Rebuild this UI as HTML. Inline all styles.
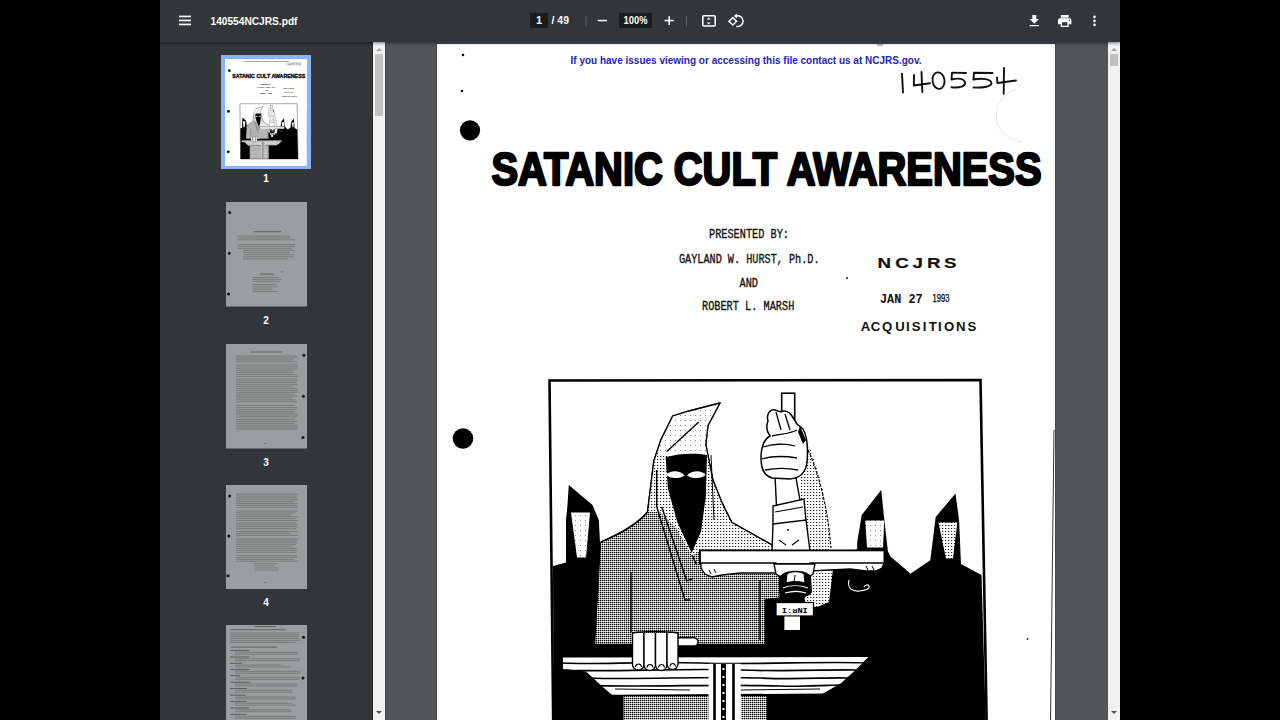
<!DOCTYPE html>
<html><head><meta charset="utf-8">
<style>
*{margin:0;padding:0;box-sizing:border-box}
html,body{width:1280px;height:720px;overflow:hidden;background:#000;font-family:"Liberation Sans",sans-serif}
.abs{position:absolute}
#tb{left:160px;top:0;width:960px;height:42px;background:#323639;box-shadow:0 1px 3px rgba(0,0,0,.5);z-index:5}
#side{left:160px;top:42px;width:213px;height:678px;background:#323639}
#main{left:385px;top:42px;width:723px;height:678px;background:#525659}
#sbl{left:373px;top:42px;width:12px;height:678px;background:#f1f1f1}
#sbr{left:1108px;top:42px;width:12px;height:678px;background:#f1f1f1}
.lbl{color:#fff;font-size:11px;width:40px;text-align:center;left:246px}
.page{left:437px;top:44px}
.tp{left:226px;width:80px;background:#9b9c9d;overflow:hidden}
</style></head><body>
<div id="tb" class="abs">
  <svg class="abs" style="left:0;top:0" width="960" height="42" font-family="Liberation Sans">
    <g fill="#fff">
      <rect x="19" y="15.6" width="12" height="1.7"/>
      <rect x="19" y="19.6" width="12" height="1.7"/>
      <rect x="19" y="23.6" width="12" height="1.7"/>
    </g>
    <text x="50.5" y="24.5" fill="#fff" font-weight="bold" font-size="11" textLength="87" lengthAdjust="spacingAndGlyphs">140554NCJRS.pdf</text>
    <rect x="370" y="13" width="18" height="15" fill="#191b1c"/>
    <text x="379" y="24.3" fill="#fff" font-size="11" font-weight="bold" text-anchor="middle">1</text>
    <text x="391.5" y="24.3" fill="#fff" font-size="11" font-weight="bold" lengthAdjust="spacingAndGlyphs" textLength="17.5">/ 49</text>
    <rect x="425.5" y="16" width="1" height="10.5" fill="#5f6368"/>
    <rect x="437.8" y="19.8" width="9.2" height="1.5" fill="#fff"/>
    <rect x="459" y="13" width="33" height="15" fill="#191b1c"/>
    <text x="463.5" y="24.3" fill="#fff" font-size="11" font-weight="bold" lengthAdjust="spacingAndGlyphs" textLength="24">100%</text>
    <rect x="504.5" y="19.8" width="9.3" height="1.5" fill="#fff"/>
    <rect x="508.4" y="16.2" width="1.5" height="8.8" fill="#fff"/>
    <rect x="526" y="16" width="1" height="10.5" fill="#5f6368"/>
    <rect x="542.8" y="15.8" width="12.4" height="10.2" rx="1" fill="none" stroke="#fff" stroke-width="1.6"/>
    <path d="M546.7 19.6 L548.7 17.6 L550.7 19.6 Z M546.7 22.4 L548.7 24.4 L550.7 22.4 Z" fill="#fff"/>
    <path d="M572.8 17.6 L576.6 21.3 L572.8 25 L569 21.3 Z" fill="none" stroke="#fff" stroke-width="1.5"/>
    <path d="M576.4 15.9 A5.4 5.4 0 1 1 576.4 26.4" fill="none" stroke="#fff" stroke-width="1.5"/>
    <path d="M573.8 15.9 L577 13.6 L577 18.2 Z" fill="#fff"/>
    <g transform="translate(866.3 13) scale(0.6667)" fill="#fff">
      <path d="M19 9h-4V3H9v6H5l7 7 7-7zM5 18v2h14v-2H5z"/>
    </g>
    <g transform="translate(896.7 13) scale(0.6667)" fill="#fff">
      <path d="M19 8H5c-1.66 0-3 1.34-3 3v6h4v4h12v-4h4v-6c0-1.66-1.34-3-3-3zm-3 11H8v-5h8v5zm3-7c-.55 0-1-.45-1-1s.45-1 1-1 1 .45 1 1-.45 1-1 1zm-1-9H6v4h12V3z"/>
    </g>
    <g transform="translate(926.5 12.8) scale(0.6667)" fill="#fff">
      <path d="M12 8c1.1 0 2-.9 2-2s-.9-2-2-2-2 .9-2 2 .9 2 2 2zm0 2c-1.1 0-2 .9-2 2s.9 2 2 2 2-.9 2-2-.9-2-2-2zm0 6c-1.1 0-2 .9-2 2s.9 2 2 2 2-.9 2-2-.9-2-2-2z"/>
    </g>
  </svg>
</div>
<div id="side" class="abs"></div>
<div id="sbl" class="abs"></div>
<div id="main" class="abs"></div>
<div class="abs" style="left:372px;top:42px;width:1px;height:678px;background:#26292b"></div>
<div class="abs" style="left:385px;top:42px;width:1px;height:678px;background:#45484b"></div>
<div id="sbr" class="abs"></div>

<!-- page content symbol -->
<svg width="0" height="0" style="position:absolute">
  <defs>
    <pattern id="st" width="2" height="2" patternUnits="userSpaceOnUse">
      <rect width="2" height="2" fill="#fff"/>
      <rect width="1" height="1" fill="#000"/>
      <rect x="1" width="1" height="1" fill="#9a9a9a"/>
      <rect y="1" width="1" height="1" fill="#b0b0b0"/>
    </pattern>
    <pattern id="st2" width="3" height="3" patternUnits="userSpaceOnUse">
      <rect width="3" height="3" fill="#fff"/>
      <rect width="1" height="1" fill="#222"/>
      <rect x="1" width="1" height="1" fill="#ccc"/>
    </pattern>
    <pattern id="st3" width="5" height="5" patternUnits="userSpaceOnUse">
      <rect width="5" height="5" fill="#fff"/>
      <rect width="1" height="1" fill="#888"/>
    </pattern>
  </defs>
  <symbol id="pg" viewBox="437 44 618 805">
    <rect x="437" y="44" width="618" height="805" fill="#fff"/>
    <text x="570.5" y="63.6" fill="#2424b4" font-family="Liberation Sans" font-weight="bold" font-size="10" textLength="351" lengthAdjust="spacingAndGlyphs">If you have issues viewing or accessing this file contact us at NCJRS.gov.</text>
    <!-- dots -->
    <circle cx="463" cy="55" r="1.3" fill="#000"/>
    <circle cx="462" cy="91" r="1.2" fill="#000"/>
    <circle cx="470" cy="130.3" r="10.1" fill="#000"/>
    <circle cx="463" cy="438.5" r="10.3" fill="#000"/>
    <circle cx="462" cy="743" r="10.3" fill="#000"/>
    <!-- handwriting -->
    <g fill="none" stroke="#111" stroke-width="1.9" stroke-linecap="round" stroke-linejoin="round">
      <path d="M902 73.8 L903 92.5"/>
      <path d="M914 75 L913.8 85.5 L930 83.2 M921.5 72 L922.3 92"/>
      <ellipse cx="938.5" cy="80.6" rx="6" ry="8.3" transform="rotate(-8 938.5 80.6)"/>
      <path d="M966 73 L952 72.6 L951.5 79.5 C958 78 964 78.5 965 82.5 C965.5 86.5 960 88 951.5 87.3"/>
      <path d="M992.5 73 L974 72.8 L973.5 79.5 C982 78 991 79 991.5 83 C991.5 86.5 984 88 973.5 87.5"/>
      <path d="M997 77.5 L997.3 83 L1016 80.5 M1004 68 L1003.7 93.8"/>
    </g>
    <path d="M1016 89 C1000 95 994 110 997 122 C1000 133 1010 140 1022 142" fill="none" stroke="#e2e2e2" stroke-width="0.9"/>
    <!-- title -->
    <text x="491.5" y="184.5" fill="#000" stroke="#000" stroke-width="2.4" stroke-linejoin="round" font-family="Liberation Sans" font-weight="bold" font-size="45.5" textLength="550" lengthAdjust="spacingAndGlyphs">SATANIC CULT AWARENESS</text>
    <!-- typewriter -->
    <g fill="#111" stroke="#111" stroke-width="0.35" font-family="Liberation Mono" font-size="13">
      <text x="709" y="238" lengthAdjust="spacingAndGlyphs" textLength="80">PRESENTED BY:</text>
      <text x="679" y="262.5" lengthAdjust="spacingAndGlyphs" textLength="140.5">GAYLAND W. HURST, Ph.D.</text>
      <text x="739.5" y="286.5" lengthAdjust="spacingAndGlyphs" textLength="18.5">AND</text>
      <text x="702" y="310.3" lengthAdjust="spacingAndGlyphs" textLength="92.3">ROBERT L. MARSH</text>
    </g>
    <!-- stamp -->
    <g fill="#111" font-family="Liberation Sans">
      <text transform="translate(884.3 267.5) scale(1.25 1)" x="0" y="0" text-anchor="middle" font-size="15" font-weight="bold" stroke="#111" stroke-width="0.2">N</text><text transform="translate(902.1 267.5) scale(1.25 1)" x="0" y="0" text-anchor="middle" font-size="15" font-weight="bold" stroke="#111" stroke-width="0.2">C</text><text transform="translate(917.6 267.5) scale(1.25 1)" x="0" y="0" text-anchor="middle" font-size="15" font-weight="bold" stroke="#111" stroke-width="0.2">J</text><text transform="translate(933.8 267.5) scale(1.25 1)" x="0" y="0" text-anchor="middle" font-size="15" font-weight="bold" stroke="#111" stroke-width="0.2">R</text><text transform="translate(950.2 267.5) scale(1.25 1)" x="0" y="0" text-anchor="middle" font-size="15" font-weight="bold" stroke="#111" stroke-width="0.2">S</text><text x="880" y="303" font-size="13" font-weight="bold" font-family="Liberation Mono" lengthAdjust="spacingAndGlyphs" textLength="42.6">JAN 27</text>
      <text x="932.5" y="302.3" font-size="11.8" font-family="Liberation Sans" stroke="#111" stroke-width="0.35" lengthAdjust="spacingAndGlyphs" textLength="17">1993</text>
      <text transform="translate(865.4 331.3) scale(1.1 1)" text-anchor="middle" font-size="12" font-weight="bold">A</text><text transform="translate(875.6 331.3) scale(1.1 1)" text-anchor="middle" font-size="12" font-weight="bold">C</text><text transform="translate(887.2 331.3) scale(1.1 1)" text-anchor="middle" font-size="12" font-weight="bold">Q</text><text transform="translate(900.0 331.3) scale(1.1 1)" text-anchor="middle" font-size="12" font-weight="bold">U</text><text transform="translate(907.8 331.3) scale(1.1 1)" text-anchor="middle" font-size="12" font-weight="bold">I</text><text transform="translate(916.2 331.3) scale(1.1 1)" text-anchor="middle" font-size="12" font-weight="bold">S</text><text transform="translate(924.6 331.3) scale(1.1 1)" text-anchor="middle" font-size="12" font-weight="bold">I</text><text transform="translate(932.7 331.3) scale(1.1 1)" text-anchor="middle" font-size="12" font-weight="bold">T</text><text transform="translate(939.8 331.3) scale(1.1 1)" text-anchor="middle" font-size="12" font-weight="bold">I</text><text transform="translate(949.2 331.3) scale(1.1 1)" text-anchor="middle" font-size="12" font-weight="bold">O</text><text transform="translate(960.7 331.3) scale(1.1 1)" text-anchor="middle" font-size="12" font-weight="bold">N</text><text transform="translate(971.8 331.3) scale(1.1 1)" text-anchor="middle" font-size="12" font-weight="bold">S</text>
    </g>
    <circle cx="847" cy="278" r="0.9" fill="#000"/>
    <circle cx="1027.5" cy="639" r="0.9" fill="#222"/>
    <rect x="877" y="44.5" width="6" height="1" fill="#888"/>

    <!-- ILLUSTRATION -->
    <g id="illus">
      <!-- black crowd silhouette -->
      <path fill="#000" d="M553,566 L566,562.5 L566,520 L567.5,505 L568.8,485 L592.5,505 L598.8,520 L600,542.5 L602.5,542.5 L602.5,562 L833,562 L857.2,549 L857.2,542.2 L861.7,515 L881.2,489.9 L884.2,518.7 L887.9,551.3 L890.6,556.7 L901.4,565.7 L910.4,573.8 L930.3,560.3 L935.7,517 L955.5,493.5 L959.1,520.5 L961,564 L980.9,574.7 L981.5,574.7 L988,797 L554,797 Z"/>
      <!-- figure faces -->
      <path fill="url(#st3)" d="M571,512.5 L590,512.5 L586,557.5 L577,557.5 Z"/>
      <path fill="url(#st3)" d="M865.3,520.5 L884.2,520.5 L883,547.6 L867,547.6 Z"/>
      <path fill="url(#st2)" d="M938.4,522.4 L957.3,522.4 L953,558.5 L946,558.5 Z"/>
      <!-- hood back behind crucifix -->
      <path fill="url(#st2)" d="M800,430 C812,445 827,490 831,548 L833,569 L829,602 L817,607 L806,607 L800,570 Z"/><path fill="none" stroke="#000" stroke-width="1.2" stroke-dasharray="3 1.5" d="M806,446 C816,465 827,500 831,548"/>
      <!-- robe dense -->
      <path fill="url(#st)" stroke="#000" stroke-width="1.3" d="M601,542 C615,536 636,526 647.5,512 L653.8,461 L661,439.6 L672.7,416 L689,411 L720,403 L708,425.4 L705.8,444.3 L712.8,479.8 L722.3,503.4 L731.7,522.3 L772,545 L772,551 L700,551 L700,564 L780,564 L780,598 L765,600 L765.3,644.5 L594.6,644.5 L600.4,543 Z"/>
      <!-- hood light overlay -->
      <path fill="url(#st2)" d="M647.5,512 L653.8,461 L661,439.6 L672.7,416 L689,411 L720,403 L708,425.4 L705.8,444.3 L712.8,479.8 L722.3,503.4 L731.7,522.3 L772,545 L772,551 L700,551 L692,556 L676,528 L660,512 Z"/>
      <path fill="url(#st3)" d="M720,403 L689,411 L672.7,416 L661,439.6 L658,455 L707,455 L705.8,444.3 L708,425.4 Z"/>
      <path fill="none" stroke="#000" stroke-width="1.3" d="M720,403 L689,411 L672.7,416 L661,439.6 L653.8,461 L647.5,512 C636,526 615,536 601,542 M720,403 L708,425.4 L705.8,444.3 L712.8,479.8 L722.3,503.4 L731.7,522.3 L772,545"/>
      <!-- face -->
      <path fill="#000" d="M665.6,457.3 C680,453 695,453 707,455 L705.8,496.3 L701,531.7 L691.6,553 L677.4,522.3 L668,489 Z"/>
      <path fill="#fff" d="M666,475 C670,470 680,470 684.5,475.5 C680,479 670,479 666,475 Z"/>
      <path fill="#fff" d="M687,475.5 C692,470 702,470 705.5,475 C702,479 692,479 687,475.5 Z"/>
      <!-- drape lines -->
      <g fill="none" stroke="#000" stroke-width="1.4">
        <path d="M698.7,421.9 L666.8,451.4"/>
        <path d="M656.7,470 L656.7,506.7 L685,600 L690,600"/>
        <path d="M661.7,506.7 L686.7,580.8 L693.3,578.3"/>
        <path d="M692,555 L696.7,565"/>
        <path d="M631,572 L631,632"/>
        <path d="M760,580 L760,640"/>
        <path d="M711,455 L714,520" stroke-width="1"/>
      </g>
      <!-- crucifix top post -->
      <rect x="781.7" y="393.2" width="13" height="40" fill="#fff" stroke="#000" stroke-width="1.6"/>
      <!-- legs -->
      <path fill="#fff" stroke="#000" stroke-width="1.4" d="M775,476 L796,478 L801,506 L776.5,506 Z"/>
      <!-- fist -->
      <path fill="#fff" stroke="#000" stroke-width="1.5" d="M768,421 C766,414 770,409 775,410 L781,412 C784,410 789,411 792,416 L797,424 L803,429 C807,436 808,450 807,462 C806,472 801,478 790,479 L772,478 C764,476 761,468 761,458 C761,448 763,440 770,436 C767,432 766,426 768,421 Z"/>
      <path fill="none" stroke="#000" stroke-width="1.3" d="M763,447 C772,444 785,443 795,446 M762,459 C772,456 785,456 797,458 M765,470 C775,468 788,468 798,470 M772,436 C780,434 790,434 797,430 M776,412 L781,430 M785,414 L790,430"/>
      <path fill="#000" d="M800,426 L806,440 L803,444 L798,432 Z"/>
      <!-- cloth and torso -->
      <path fill="#fff" stroke="#000" stroke-width="1.4" d="M773,506 L804,499 L806,521 L773,525 Z"/>
      <path fill="#fff" stroke="#000" stroke-width="1.4" d="M773,524 L806,520 L810,551 L772,551 Z"/>
      <path fill="none" stroke="#000" stroke-width="1.1" d="M775,512 L803,507 M779,540 L786,545 M799,540 L792,545"/>
      <circle cx="788" cy="530" r="0.9" fill="#000"/>
      <!-- beam -->
      <rect x="700" y="550.4" width="184.4" height="13.6" fill="#fff" stroke="#000" stroke-width="1.8"/>
      <!-- arms & chest -->
      <path fill="#fff" stroke="#000" stroke-width="1.3" d="M776,563 L701,563 L701,568 L705,574 L712,577 L722,575 L740,573 L776,573 Z"/>
      <path fill="none" stroke="#000" stroke-width="1" d="M709,570 L711,574 M714,569 L716,573"/>
      <path fill="#fff" stroke="#000" stroke-width="1.3" d="M810,563 L884,563 L882,568 L876,571 L866,571 L850,569 L810,571 Z"/>
      <path fill="none" stroke="#000" stroke-width="1" d="M866,566 L868,570 M872,566 L874,570"/>
      <path fill="#fff" stroke="#000" stroke-width="1.3" d="M774,564 L815,564 L813,574 L802,581 L786,580 L776,574 Z"/>
      <!-- head -->
      <path fill="#000" d="M779,578 C781,569 808,568 811,577 L812,592 C808,600 784,600 779,592 Z"/>
      <path fill="#fff" stroke="#000" stroke-width="1" d="M787,574 C791,571 800,571 804,574 L805,583 C799,581 792,581 786,583 Z"/>
      <path fill="none" stroke="#fff" stroke-width="1.2" d="M783,588 C790,585 800,585 808,588 M785,593 C792,591 800,591 806,593"/>
      <path fill="none" stroke="#000" stroke-width="1" d="M795,575 L794,582"/>
      <!-- sign & post -->
      <rect x="776" y="602.5" width="37.5" height="13.5" fill="#fff" stroke="#000" stroke-width="1.3"/>
      <text x="794.8" y="612.8" font-family="Liberation Mono" font-size="8" font-weight="bold" text-anchor="middle" fill="#000" lengthAdjust="spacingAndGlyphs" textLength="26">I:ᴚNI</text>
      <rect x="784.4" y="616.5" width="15.6" height="13.5" fill="#fff"/>
      <path fill="none" stroke="#fff" stroke-width="1.1" d="M849,580 C847,588 852,592 860,591 C866,590 870,589 869,586 C868,584 865,585 864,587"/>
      <!-- altar planks -->
      <path fill="#fff" d="M562.9,657.4 L868.4,657 L855.5,670 L841.3,683 L823,693.5 L611.9,694.8 L602.8,687 L586,671.6 L563,669 Z"/>
      <g stroke="#000" stroke-width="1.7" fill="none">
        <path d="M562,663 C600,665 640,661 700,663 C760,665 820,661 868,663"/>
        <path d="M566,670.3 C620,672 680,668 740,670 C800,672 830,669 856,670"/>
        <path d="M588,678 C640,680 700,676 760,678 C800,680 830,677 848,678"/>
        <path d="M598,685.7 C660,687 720,684 780,686 C810,687 830,685 840,685"/>
        <path d="M615,689 L690,690 M740,690 L820,689" stroke-width="1"/>
      </g>
      <!-- fingers -->
      <path fill="#fff" stroke="#000" stroke-width="1.4" d="M670,638 L693,637.5 C699,638 700,645 694,646 L670,646 Z"/>
      <g fill="#fff" stroke="#000" stroke-width="1.4">
        <rect x="632.5" y="626" width="11.5" height="44" rx="5.5"/>
        <rect x="644" y="626" width="11.5" height="44.5" rx="5.5"/>
        <rect x="655.5" y="626" width="11.5" height="44.5" rx="5.5"/>
        <rect x="667" y="626" width="11" height="43.5" rx="5.5"/>
      </g>
      <rect x="632" y="620" width="47" height="13" fill="url(#st)"/>
      <path fill="none" stroke="#000" stroke-width="1.4" d="M632.5,633 C645,631 665,631 678,633"/>
      <g fill="none" stroke="#000" stroke-width="1.1">
        <path d="M635.5,667 C636,663 641,663 641.5,667 M647,667.5 C647.5,663.5 652.5,663.5 653,667.5 M658.5,667.5 C659,663.5 664,663.5 664.5,667.5 M670,666.5 C670.5,662.5 675,662.5 675.5,666.5"/>
      </g>
      <!-- pedestal -->
      <path fill="url(#st)" d="M623.5,696 L766.5,696 L766.5,797 L623.5,797 Z"/>
      <rect x="708.5" y="663.8" width="32.3" height="134" fill="#fff"/>
      <g stroke="#000" stroke-width="2.6"><path d="M714.5,664 L714.5,797 M733.5,664 L733.5,797"/></g>
      <path stroke="#000" stroke-width="5" d="M723.5,664 L723.5,797"/>
      <path stroke="#fff" stroke-width="2" stroke-dasharray="2 6" d="M723.5,668 L723.5,797"/>
      <!-- frame -->
      <path fill="none" stroke="#000" stroke-width="2.6" d="M549.5,380.5 L980.5,380 L988,797 L554,797 Z"/>
    </g>
    <path d="M1054,430 L1049,849" stroke="#000" stroke-width="0.8"/>
  </symbol>
</svg>

<div class="abs" style="left:436px;top:43px;width:620px;height:700px;background:#44474a"></div>
<svg class="abs page" width="618" height="805"><use href="#pg" width="618" height="805"/></svg>

<!-- thumbnails -->
<div class="abs" style="left:221px;top:55px;width:90px;height:114px;background:#8ab4f8"></div>
<svg class="abs" style="left:246px;top:160px" width="40" height="460" font-family="Liberation Sans" font-weight="bold" font-size="10" fill="#fff" text-anchor="middle">
  <text x="20" y="22">1</text><text x="20" y="164.1">2</text><text x="20" y="305.5">3</text><text x="20" y="445.8">4</text>
</svg>
<svg class="abs" style="left:225px;top:59px" width="82" height="107"><use href="#pg" width="82" height="107"/></svg>

<svg class="abs" style="left:226px;top:202px" width="81" height="104.5"><g transform="translate(-226 -202)"><rect x="226" y="202" width="81" height="104.5" fill="#9c9d9e"/><circle cx="229.6" cy="212.6" r="1.5" fill="#111"/><circle cx="229.3" cy="253.3" r="1.5" fill="#111"/><circle cx="228.5" cy="294" r="1.5" fill="#111"/><rect x="253.5" y="231.20" width="27.5" height="1" fill="#4a4a4a" opacity="0.7"/><rect x="237.6" y="235.50" width="52.2" height="1" fill="#4a4a4a" opacity="0.42"/><rect x="237.6" y="237.40" width="53.1" height="1" fill="#4a4a4a" opacity="0.42"/><rect x="237.6" y="239.30" width="57.3" height="1" fill="#4a4a4a" opacity="0.42"/><rect x="237.6" y="244.00" width="57.3" height="1" fill="#4a4a4a" opacity="0.42"/><rect x="237.6" y="245.90" width="57.3" height="1" fill="#4a4a4a" opacity="0.42"/><rect x="237.6" y="247.80" width="54.0" height="1" fill="#4a4a4a" opacity="0.42"/><rect x="243.0" y="250.00" width="51.8" height="1" fill="#4a4a4a" opacity="0.42"/><rect x="243.0" y="252.10" width="47.0" height="1" fill="#4a4a4a" opacity="0.42"/><rect x="243.0" y="254.20" width="51.1" height="1" fill="#4a4a4a" opacity="0.42"/><rect x="243.0" y="256.30" width="50.5" height="1" fill="#4a4a4a" opacity="0.42"/><rect x="243.0" y="258.40" width="45.1" height="1" fill="#4a4a4a" opacity="0.42"/><rect x="280.7" y="271.30" width="2.9" height="1" fill="#4a4a4a" opacity="0.42"/><rect x="260.0" y="273.60" width="14.1" height="1" fill="#4a4a4a" opacity="0.7"/><rect x="252.7" y="277.00" width="26.3" height="1" fill="#4a4a4a" opacity="0.42"/><rect x="252.7" y="278.90" width="28.5" height="1" fill="#4a4a4a" opacity="0.42"/><rect x="252.7" y="280.80" width="27.8" height="1" fill="#4a4a4a" opacity="0.42"/><rect x="252.7" y="284.00" width="24.5" height="1" fill="#4a4a4a" opacity="0.42"/><rect x="252.7" y="286.30" width="24.8" height="1" fill="#4a4a4a" opacity="0.42"/><rect x="252.7" y="288.60" width="19.9" height="1" fill="#4a4a4a" opacity="0.42"/><rect x="252.7" y="290.90" width="24.8" height="1" fill="#4a4a4a" opacity="0.42"/></g></svg>
<svg class="abs" style="left:226px;top:344px" width="81" height="104.5"><g transform="translate(-226 -344)"><rect x="226" y="344" width="81" height="104.5" fill="#9c9d9e"/><circle cx="303.9" cy="355.3" r="1.5" fill="#111"/><circle cx="303.4" cy="396.3" r="1.5" fill="#111"/><circle cx="303" cy="437.4" r="1.5" fill="#111"/><rect x="251.0" y="351.50" width="31.1" height="1" fill="#4a4a4a" opacity="0.7"/><rect x="236.0" y="355.60" width="61.9" height="1" fill="#4a4a4a" opacity="0.42"/><rect x="236.0" y="357.50" width="61.3" height="1" fill="#4a4a4a" opacity="0.42"/><rect x="236.0" y="359.40" width="57.7" height="1" fill="#4a4a4a" opacity="0.42"/><rect x="236.0" y="361.30" width="61.0" height="1" fill="#4a4a4a" opacity="0.42"/><rect x="236.0" y="364.50" width="61.9" height="1" fill="#4a4a4a" opacity="0.42"/><rect x="236.0" y="366.40" width="62.1" height="1" fill="#4a4a4a" opacity="0.42"/><rect x="236.0" y="368.30" width="61.2" height="1" fill="#4a4a4a" opacity="0.42"/><rect x="236.0" y="370.20" width="58.4" height="1" fill="#4a4a4a" opacity="0.42"/><rect x="236.0" y="372.10" width="57.0" height="1" fill="#4a4a4a" opacity="0.42"/><rect x="236.0" y="374.00" width="61.4" height="1" fill="#4a4a4a" opacity="0.42"/><rect x="236.0" y="375.90" width="61.8" height="1" fill="#4a4a4a" opacity="0.42"/><rect x="236.0" y="378.50" width="61.4" height="1" fill="#4a4a4a" opacity="0.42"/><rect x="236.0" y="380.40" width="61.6" height="1" fill="#4a4a4a" opacity="0.42"/><rect x="236.0" y="382.30" width="60.9" height="1" fill="#4a4a4a" opacity="0.42"/><rect x="236.0" y="384.20" width="61.3" height="1" fill="#4a4a4a" opacity="0.42"/><rect x="236.0" y="386.10" width="56.7" height="1" fill="#4a4a4a" opacity="0.42"/><rect x="236.0" y="388.00" width="60.8" height="1" fill="#4a4a4a" opacity="0.42"/><rect x="236.0" y="389.90" width="61.9" height="1" fill="#4a4a4a" opacity="0.42"/><rect x="236.0" y="391.80" width="61.3" height="1" fill="#4a4a4a" opacity="0.42"/><rect x="236.0" y="393.70" width="58.6" height="1" fill="#4a4a4a" opacity="0.42"/><rect x="236.0" y="395.60" width="61.4" height="1" fill="#4a4a4a" opacity="0.42"/><rect x="236.0" y="397.50" width="56.2" height="1" fill="#4a4a4a" opacity="0.42"/><rect x="236.0" y="399.40" width="60.3" height="1" fill="#4a4a4a" opacity="0.42"/><rect x="236.0" y="401.30" width="61.0" height="1" fill="#4a4a4a" opacity="0.42"/><rect x="236.0" y="405.00" width="58.7" height="1" fill="#4a4a4a" opacity="0.42"/><rect x="236.0" y="406.90" width="61.0" height="1" fill="#4a4a4a" opacity="0.42"/><rect x="236.0" y="408.80" width="61.0" height="1" fill="#4a4a4a" opacity="0.42"/><rect x="236.0" y="410.70" width="59.0" height="1" fill="#4a4a4a" opacity="0.42"/><rect x="236.0" y="412.60" width="61.0" height="1" fill="#4a4a4a" opacity="0.42"/><rect x="236.0" y="414.50" width="62.1" height="1" fill="#4a4a4a" opacity="0.42"/><rect x="236.0" y="416.40" width="60.4" height="1" fill="#4a4a4a" opacity="0.42"/><rect x="236.0" y="419.00" width="58.4" height="1" fill="#4a4a4a" opacity="0.42"/><rect x="236.0" y="420.90" width="61.9" height="1" fill="#4a4a4a" opacity="0.42"/><rect x="236.0" y="422.80" width="58.9" height="1" fill="#4a4a4a" opacity="0.42"/><rect x="236.0" y="424.70" width="61.5" height="1" fill="#4a4a4a" opacity="0.42"/><rect x="236.0" y="426.60" width="61.3" height="1" fill="#4a4a4a" opacity="0.42"/><rect x="236.0" y="428.50" width="61.4" height="1" fill="#4a4a4a" opacity="0.42"/><rect x="264.5" y="443" width="2" height="1" fill="#4a4a4a" opacity=".5"/></g></svg>
<svg class="abs" style="left:226px;top:485px" width="81" height="104"><g transform="translate(-226 -485)"><rect x="226" y="485" width="81" height="104" fill="#9c9d9e"/><circle cx="229.6" cy="496" r="1.5" fill="#111"/><circle cx="228.8" cy="535.9" r="1.5" fill="#111"/><circle cx="228" cy="575.8" r="1.5" fill="#111"/><rect x="236.0" y="493.60" width="62.2" height="1" fill="#4a4a4a" opacity="0.42"/><rect x="236.0" y="495.50" width="61.1" height="1" fill="#4a4a4a" opacity="0.42"/><rect x="236.0" y="497.40" width="61.1" height="1" fill="#4a4a4a" opacity="0.42"/><rect x="236.0" y="499.30" width="61.7" height="1" fill="#4a4a4a" opacity="0.42"/><rect x="236.0" y="501.20" width="57.2" height="1" fill="#4a4a4a" opacity="0.42"/><rect x="236.0" y="503.10" width="61.8" height="1" fill="#4a4a4a" opacity="0.42"/><rect x="236.0" y="505.00" width="61.0" height="1" fill="#4a4a4a" opacity="0.42"/><rect x="236.0" y="506.90" width="61.9" height="1" fill="#4a4a4a" opacity="0.42"/><rect x="236.0" y="510.50" width="61.1" height="1" fill="#4a4a4a" opacity="0.42"/><rect x="236.0" y="512.40" width="59.4" height="1" fill="#4a4a4a" opacity="0.42"/><rect x="236.0" y="514.30" width="55.3" height="1" fill="#4a4a4a" opacity="0.42"/><rect x="236.0" y="516.20" width="62.1" height="1" fill="#4a4a4a" opacity="0.42"/><rect x="236.0" y="518.10" width="59.5" height="1" fill="#4a4a4a" opacity="0.42"/><rect x="236.0" y="520.00" width="62.1" height="1" fill="#4a4a4a" opacity="0.42"/><rect x="236.0" y="522.50" width="60.8" height="1" fill="#4a4a4a" opacity="0.42"/><rect x="236.0" y="524.40" width="61.6" height="1" fill="#4a4a4a" opacity="0.42"/><rect x="236.0" y="526.30" width="61.5" height="1" fill="#4a4a4a" opacity="0.42"/><rect x="236.0" y="528.20" width="60.2" height="1" fill="#4a4a4a" opacity="0.42"/><rect x="236.0" y="531.00" width="62.1" height="1" fill="#4a4a4a" opacity="0.42"/><rect x="236.0" y="532.90" width="54.7" height="1" fill="#4a4a4a" opacity="0.42"/><rect x="236.0" y="534.80" width="62.1" height="1" fill="#4a4a4a" opacity="0.42"/><rect x="236.0" y="538.50" width="62.3" height="1" fill="#4a4a4a" opacity="0.42"/><rect x="236.0" y="540.40" width="60.8" height="1" fill="#4a4a4a" opacity="0.42"/><rect x="236.0" y="542.30" width="61.3" height="1" fill="#4a4a4a" opacity="0.42"/><rect x="236.0" y="544.20" width="59.4" height="1" fill="#4a4a4a" opacity="0.42"/><rect x="236.0" y="546.10" width="56.1" height="1" fill="#4a4a4a" opacity="0.42"/><rect x="236.0" y="548.00" width="61.1" height="1" fill="#4a4a4a" opacity="0.42"/><rect x="236.0" y="549.90" width="60.5" height="1" fill="#4a4a4a" opacity="0.42"/><rect x="236.0" y="551.80" width="60.8" height="1" fill="#4a4a4a" opacity="0.42"/><rect x="236.0" y="555.00" width="61.1" height="1" fill="#4a4a4a" opacity="0.42"/><rect x="236.0" y="556.90" width="61.2" height="1" fill="#4a4a4a" opacity="0.42"/><rect x="236.0" y="558.80" width="58.2" height="1" fill="#4a4a4a" opacity="0.42"/><rect x="236.0" y="560.70" width="62.3" height="1" fill="#4a4a4a" opacity="0.42"/><rect x="254.3" y="563.00" width="23.5" height="1" fill="#4a4a4a" opacity="0.42"/><rect x="254.3" y="565.20" width="20.2" height="1" fill="#4a4a4a" opacity="0.42"/><rect x="254.3" y="567.40" width="25.0" height="1" fill="#4a4a4a" opacity="0.42"/><rect x="254.3" y="569.60" width="24.2" height="1" fill="#4a4a4a" opacity="0.42"/><rect x="264.5" y="582" width="2" height="1" fill="#4a4a4a" opacity=".5"/></g></svg>
<svg class="abs" style="left:226px;top:625px" width="81" height="95"><g transform="translate(-226 -625)"><rect x="226" y="625" width="81" height="95" fill="#9c9d9e"/><circle cx="303.5" cy="637.2" r="1.5" fill="#111"/><circle cx="303" cy="678" r="1.5" fill="#111"/><rect x="254.3" y="626.00" width="21.9" height="1" fill="#4a4a4a" opacity="0.7"/><rect x="230.2" y="629.20" width="54.9" height="1" fill="#4a4a4a" opacity="0.7"/><rect x="230.0" y="632.50" width="69.2" height="1" fill="#4a4a4a" opacity="0.42"/><rect x="230.0" y="634.40" width="69.4" height="1" fill="#4a4a4a" opacity="0.42"/><rect x="230.0" y="636.30" width="69.6" height="1" fill="#4a4a4a" opacity="0.42"/><rect x="230.0" y="638.20" width="70.3" height="1" fill="#4a4a4a" opacity="0.42"/><rect x="230.0" y="640.10" width="69.8" height="1" fill="#4a4a4a" opacity="0.42"/><rect x="230.0" y="642.00" width="65.7" height="1" fill="#4a4a4a" opacity="0.42"/><rect x="231.0" y="646.60" width="45.9" height="1" fill="#4a4a4a" opacity="0.7"/><rect x="230" y="650.0" width="19.4" height="1" fill="#333" opacity=".6"/><rect x="235.0" y="651.80" width="63.0" height="1" fill="#4a4a4a" opacity="0.42"/><rect x="235.0" y="653.70" width="62.8" height="1" fill="#4a4a4a" opacity="0.42"/><rect x="230" y="656.5" width="19.6" height="1" fill="#333" opacity=".6"/><rect x="235.0" y="658.30" width="65.1" height="1" fill="#4a4a4a" opacity="0.42"/><rect x="235.0" y="660.20" width="64.6" height="1" fill="#4a4a4a" opacity="0.42"/><rect x="230" y="662.8" width="12.0" height="1" fill="#333" opacity=".6"/><rect x="235.0" y="664.60" width="49.2" height="1" fill="#4a4a4a" opacity="0.42"/><rect x="235.0" y="666.50" width="56.2" height="1" fill="#4a4a4a" opacity="0.42"/><rect x="230" y="669.0" width="19.9" height="1" fill="#333" opacity=".6"/><rect x="235.0" y="670.80" width="65.3" height="1" fill="#4a4a4a" opacity="0.42"/><rect x="235.0" y="672.70" width="65.6" height="1" fill="#4a4a4a" opacity="0.42"/><rect x="230" y="675.0" width="10.2" height="1" fill="#333" opacity=".6"/><rect x="235.0" y="676.80" width="64.9" height="1" fill="#4a4a4a" opacity="0.42"/><rect x="235.0" y="678.70" width="65.0" height="1" fill="#4a4a4a" opacity="0.42"/><rect x="230" y="681.7" width="20.5" height="1" fill="#333" opacity=".6"/><rect x="235.0" y="683.50" width="62.1" height="1" fill="#4a4a4a" opacity="0.42"/><rect x="235.0" y="685.40" width="62.2" height="1" fill="#4a4a4a" opacity="0.42"/><rect x="230" y="688.0" width="17.0" height="1" fill="#333" opacity=".6"/><rect x="235.0" y="689.80" width="57.7" height="1" fill="#4a4a4a" opacity="0.42"/><rect x="235.0" y="691.70" width="57.3" height="1" fill="#4a4a4a" opacity="0.42"/><rect x="230" y="694.7" width="15.5" height="1" fill="#333" opacity=".6"/><rect x="235.0" y="696.50" width="60.8" height="1" fill="#4a4a4a" opacity="0.42"/><rect x="235.0" y="698.40" width="60.7" height="1" fill="#4a4a4a" opacity="0.42"/><rect x="230" y="701.0" width="16.4" height="1" fill="#333" opacity=".6"/><rect x="235.0" y="702.80" width="57.2" height="1" fill="#4a4a4a" opacity="0.42"/><rect x="235.0" y="704.70" width="60.7" height="1" fill="#4a4a4a" opacity="0.42"/><rect x="230" y="707.5" width="19.6" height="1" fill="#333" opacity=".6"/><rect x="235.0" y="709.30" width="55.8" height="1" fill="#4a4a4a" opacity="0.42"/><rect x="235.0" y="711.20" width="56.4" height="1" fill="#4a4a4a" opacity="0.42"/><rect x="230" y="714.0" width="16.2" height="1" fill="#333" opacity=".6"/><rect x="235.0" y="715.80" width="61.0" height="1" fill="#4a4a4a" opacity="0.42"/><rect x="235.0" y="717.70" width="60.7" height="1" fill="#4a4a4a" opacity="0.42"/></g></svg>




<!-- scrollbar details -->
<div class="abs" style="left:375px;top:54px;width:8px;height:62px;background:#c1c1c1"></div>
<svg class="abs" style="left:373px;top:42px" width="12" height="678">
  <path d="M3 9 L6 6 L9 9 Z" fill="#a3a3a3"/>
  <path d="M3 669 L6 672 L9 669 Z" fill="#505050"/>
</svg>
<div class="abs" style="left:1110px;top:54px;width:8px;height:12px;background:#c1c1c1"></div>
<svg class="abs" style="left:1108px;top:42px" width="12" height="678">
  <path d="M3 9 L6 6 L9 9 Z" fill="#a3a3a3"/>
  <path d="M3 669 L6 672 L9 669 Z" fill="#505050"/>
</svg>
</body></html>
